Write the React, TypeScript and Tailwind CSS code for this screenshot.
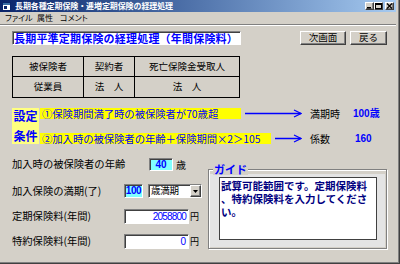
import React from "react";

const raised =
  "border border-t-white border-l-white border-r-[#404040] border-b-[#404040] shadow-[inset_-1px_-1px_0_#808080]";
const sunken =
  "border border-t-[#808080] border-l-[#808080] border-r-white border-b-white shadow-[inset_1px_1px_0_#404040]";

function Arrow({ width }: { width: number }) {
  return (
    <svg width={width} height={9} viewBox={`0 0 ${width} 9`} className="block">
      <line x1={0} y1={4.5} x2={width - 1} y2={4.5} stroke="#0000ff" strokeWidth={1.5} />
      <polyline
        points={`${width - 8},1 ${width - 1},4.5 ${width - 8},8`}
        fill="none"
        stroke="#0000ff"
        strokeWidth={1.2}
      />
    </svg>
  );
}

function WinButton({ children }: { children: React.ReactNode }) {
  return (
    <div className={`w-[9px] h-[8px] bg-[#d4d0c8] flex items-center justify-center ${raised}`}>
      {children}
    </div>
  );
}

export default function App() {
  return (
    <div className="w-[400px] h-[264px] overflow-hidden bg-[#d4d0c8] font-['Noto_Sans_CJK_JP','Noto_Sans',sans-serif] text-black shadow-[inset_-1px_-1px_0_#404040,inset_-2px_-2px_0_#808080]">
      <div className="w-[396px]">
        {/* title bar */}
        <div className="h-[12px] flex items-center bg-linear-to-r from-[#0a246a] to-[#a6caf0] px-[2px]">
          <svg width="9" height="9" viewBox="0 0 9 9" className="block">
            <rect x="0.5" y="0.5" width="8" height="8" fill="#fff" stroke="#0a246a" />
            <rect x="1" y="1" width="7" height="2" fill="#3a6ea5" />
            <rect x="2" y="4" width="3" height="3" fill="#0a246a" />
          </svg>
          <span className="ml-[4px] text-[8px] leading-none font-bold text-white tracking-[-0.1px] whitespace-nowrap">
            長期各種定期保険・逓増定期保険の経理処理
          </span>
          <div className="ml-auto flex">
            <WinButton>
              <svg width="7" height="6" viewBox="0 0 7 6" className="block">
                <rect x="1" y="4" width="4" height="1.5" fill="#000" />
              </svg>
            </WinButton>
            <WinButton>
              <svg width="7" height="6" viewBox="0 0 7 6" className="block">
                <rect x="0.5" y="0.5" width="6" height="5" fill="none" stroke="#000" />
                <rect x="0.5" y="0.5" width="6" height="1.5" fill="#000" />
              </svg>
            </WinButton>
            <div className="ml-[2px]">
              <WinButton>
                <svg width="7" height="6" viewBox="0 0 7 6" className="block">
                  <path d="M1 0.5 L6 5.5 M6 0.5 L1 5.5" stroke="#000" strokeWidth="1.3" />
                </svg>
              </WinButton>
            </div>
          </div>
        </div>
        {/* menu bar */}
        <div className="h-[12px] flex items-center pl-[5px] text-[8px] leading-none [font-feature-settings:'palt'] whitespace-nowrap">
          <span className="w-[32px]">ファイル</span>
          <span className="w-[23px]">属性</span>
          <span>コメント</span>
        </div>
        <div className="h-[2px] border-t border-t-[#808080] border-b border-b-white" />
      </div>

      <div className="pl-[12px]">
        {/* heading + buttons */}
        <div className="mt-[5px] flex h-[14px]">
          <div className={`w-[229px] h-[14px] bg-white flex items-center pl-[1px] ${sunken}`}>
            <span className="text-[11px] leading-none font-bold text-[#0000ff] tracking-[0.2px] whitespace-nowrap">
              長期平準定期保険の経理処理（年間保険料）
            </span>
          </div>
          <button className={`ml-[59px] w-[46px] h-[14px] bg-[#d4d0c8] text-[9.5px] leading-none flex items-center justify-center ${raised}`}>
            次画面
          </button>
          <button className={`ml-[4px] w-[37px] h-[14px] bg-[#d4d0c8] text-[9.5px] leading-none flex items-center justify-center ${raised}`}>
            戻る
          </button>
        </div>

        {/* parties table */}
        <div className="mt-[11px] w-[228px] border border-black text-[9.5px] leading-none">
          <div className="flex h-[20px] border-b border-black">
            <div className="w-[71px] border-r border-black flex items-center justify-center">被保険者</div>
            <div className="w-[51px] border-r border-black flex items-center justify-center">契約者</div>
            <div className="flex-1 flex items-center justify-center">死亡保険金受取人</div>
          </div>
          <div className="flex h-[20px]">
            <div className="w-[71px] border-r border-black flex items-center justify-center">従業員</div>
            <div className="w-[51px] border-r border-black flex items-center justify-center">法　人</div>
            <div className="flex-1 flex items-center justify-center">法　人</div>
          </div>
        </div>

        {/* conditions */}
        <div className="mt-[10px] flex h-[36px]">
          <div className="w-[27px] bg-[#ffff80] flex flex-col justify-between items-center py-[2px] text-[12px] leading-none font-bold text-[#0000ff]">
            <span>設定</span>
            <span>条件</span>
          </div>
          <div className="ml-[1px] flex flex-col text-[10.3px] leading-[11px] whitespace-nowrap">
            <div className="flex items-center h-[11px]">
              <div className="w-[201px] h-[11px] bg-[#ffff00] pl-[2px] text-[#0000ff]">
                ①保険期間満了時の被保険者が70歳超
              </div>
              <div className="w-[69px] pl-[4px]">
                <Arrow width={57} />
              </div>
              <span className="w-[43px] text-[10px]">満期時</span>
              <span className="font-['Liberation_Sans','Noto_Sans_CJK_JP',sans-serif] font-bold text-[10px] text-[#0000ff]">
                100歳
              </span>
            </div>
            <div className="mt-[14px] flex items-center h-[11px]">
              <div className="w-[231px] h-[11px] bg-[#ffff00] pl-[2px] text-[#0000ff]">
                ②加入時の被保険者の年齢＋保険期間×2＞105
              </div>
              <div className="w-[39px] pl-[4px]">
                <Arrow width={27} />
              </div>
              <span className="w-[45px] text-[10px]">係数</span>
              <span className="font-['Liberation_Sans',sans-serif] font-bold text-[10px] text-[#0000ff]">160</span>
            </div>
          </div>
        </div>

        {/* inputs + guide */}
        <div className="mt-[14px] flex">
          <div className="w-[190px] text-[10.3px] leading-none whitespace-nowrap">
            <div className="flex items-center h-[13px]">
              <span className="w-[137px]">加入時の被保険者の年齢</span>
              <div className={`w-[24px] h-[13px] bg-[#80ffff] flex items-center justify-center font-['Liberation_Sans',sans-serif] font-bold text-[10px] text-[#0000ff] ${sunken}`}>
                40
              </div>
              <span className="ml-[3px] text-[10px]">歳</span>
            </div>
            <div className="mt-[13px] flex items-center h-[14px]">
              <span className="w-[112px]">加入保険の満期(了)</span>
              <div className={`w-[19px] h-[14px] bg-[#80ffff] flex items-center justify-center font-['Liberation_Sans',sans-serif] font-bold text-[10px] tracking-[-0.4px] text-[#0000ff] ${sunken}`}>
                100
              </div>
              <div className={`ml-[5px] w-[54px] h-[14px] bg-white flex items-center ${sunken}`}>
                <span className="flex-1 pl-[2px] text-[9.5px] tracking-[-0.2px]">歳満期</span>
                <div className={`w-[11px] h-[12px] bg-[#d4d0c8] flex items-center justify-center ${raised}`}>
                  <svg width="5" height="3" viewBox="0 0 5 3" className="block">
                    <path d="M0 0 H5 L2.5 3 Z" fill="#000" />
                  </svg>
                </div>
              </div>
            </div>
            <div className="mt-[11px] flex items-center h-[15px]">
              <span className="w-[112px]">定期保険料(年間)</span>
              <div className={`w-[65px] h-[15px] bg-white flex items-center justify-end pr-[2px] font-['Liberation_Sans',sans-serif] text-[10px] tracking-[-0.8px] text-[#0000ff] ${sunken}`}>
                2058800
              </div>
              <span className="ml-[1px] text-[9px]">円</span>
            </div>
            <div className="mt-[10px] flex items-center h-[15px]">
              <span className="w-[112px]">特約保険料(年間)</span>
              <div className={`w-[65px] h-[15px] bg-white flex items-center justify-end pr-[2px] font-['Liberation_Sans',sans-serif] text-[10px] text-[#0000ff] ${sunken}`}>
                0
              </div>
              <span className="ml-[1px] text-[9px]">円</span>
            </div>
          </div>

          <div className="ml-[6px] pt-[11px]">
            <div className="relative w-[179px] h-[80px] border border-[#808080] shadow-[inset_1px_1px_0_#fff,1px_1px_0_#fff] pt-[4px] px-[1px] pb-[1px]">
              <span className="absolute -top-[6px] left-[4px] px-[1px] bg-[#d4d0c8] text-[11px] leading-none font-bold text-[#0000ff]">
                ガイド
              </span>
              <div className="w-[175px] h-[73px] bg-[#e4e4e4] pt-[3px] pl-[9px]">
                <div className="w-[158px] h-[63px] bg-white border border-[#404040] pl-[1px] pt-[1px] text-[10.5px] leading-[13px] font-bold text-[#000080] whitespace-nowrap">
                  <div>試算可能範囲です。定期保険料</div>
                  <div>、特約保険料を入力してくださ</div>
                  <div>い。</div>
                </div>
              </div>
            </div>
          </div>
        </div>
      </div>
    </div>
  );
}
